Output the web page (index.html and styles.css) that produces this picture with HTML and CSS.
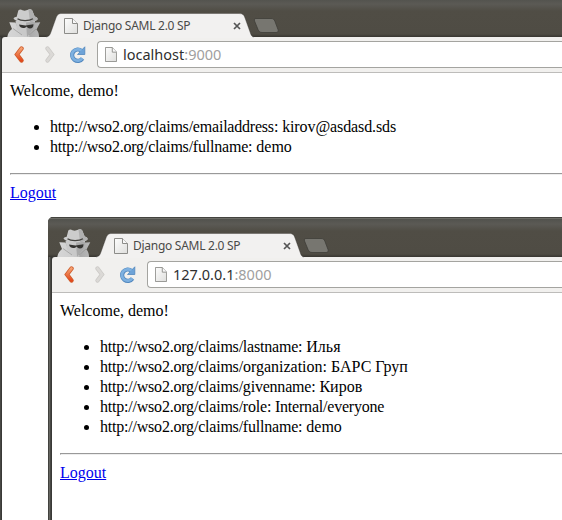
FILE: index.html
```html
<!DOCTYPE html>
<html lang="en">
<head>
<meta charset="utf-8">
<title>Django SAML 2.0 SP</title>
<link rel="stylesheet" href="styles.css">
</head>
<body>
<svg width="0" height="0" class="defs" aria-hidden="true">
  <defs>
    <linearGradient id="paper" x1="0" y1="0" x2="1" y2="1"><stop offset="0" stop-color="#fdfdfd"/><stop offset="1" stop-color="#dededc"/></linearGradient>
    <linearGradient id="orange" x1="0" y1="0" x2="0" y2="1"><stop offset="0" stop-color="#f4a070"/><stop offset="1" stop-color="#e4481c"/></linearGradient>
    <linearGradient id="coat" x1="0" y1="0" x2="1" y2="0"><stop offset="0" stop-color="#d6d6d6"/><stop offset=".55" stop-color="#cdcdcd"/><stop offset=".7" stop-color="#aaaaaa"/><stop offset="1" stop-color="#b8b8b8"/></linearGradient>
    <symbol id="spy" viewBox="0 0 34 28">
      <path d="M.3 28C1 24 2.500 22 5 20L2.300 13.200 8.500 13.500 10 17H27L28 13.500 33.300 13.200 29.500 20.500C31.500 23 32 25 32 28z" fill="url(#coat)"/>
      <path d="M8.500 12h19.500l-1 8-6 8h-4l-7-7z" fill="#c9c9c9"/>
      <path d="M19 13h9l-1 7-7 8z" fill="#a9a9a9"/>
      <path d="M6.500 9.500C7 8 8.500 8 9.700 7.700L11.300 1.500C12.500.300 14 .300 15.500 1.200 18 2.200 19 1.500 21.500.500 23.500 0 25 .5 25.500 2L27.700 7.500C30 8 31 9 30.500 10.500 27 14.500 10 14.500 6.500 9.500z" fill="#cccccc"/>
      <path d="M21.500.500C23.500 0 25 .5 25.500 2L27.700 7.500C30 8 31 9 30.500 10.500 29 12 26 13 23 13.300z" fill="#b0b0b0"/>
      <path d="M10.500 9.800C14 12.300 22 12.300 26 9.800" fill="none" stroke="#454440" stroke-width="1.300"/>
      <path d="M12 15.500l6.500 1 8-1.200c0 3-1.500 4.200-3.500 4.200-1.500 0-2.500-.7-3.500-2-1.500 2.200-6.500 2.500-7.500-2z" fill="#353431"/>
      <path d="M6 19.500L15 26M29 20L22 26" fill="none" stroke="#8f8f8d" stroke-width=".6"/>
    </symbol>
    <symbol id="page" viewBox="0 0 14 16" preserveAspectRatio="none">
      <path d="M.5.500h8l5 5v10H.500z" fill="url(#paper)" stroke="#8c8c89"/>
      <path d="M8.500.500v5h5" fill="#f8f8f8" stroke="#8c8c89"/>
    </symbol>
    <symbol id="back" viewBox="0 0 10 17"><path d="M7.500 2.500L3 8.500 7.500 14.500" fill="none" stroke="#cf5d2c" stroke-width="4.400" stroke-linecap="round"/><path d="M7.500 2.500L3 8.500 7.500 14.500" fill="none" stroke="url(#orange)" stroke-width="2.800" stroke-linecap="round"/></symbol>
    <symbol id="forward" viewBox="0 0 10 17"><path d="M2.500 2.500l4.500 6L2.500 14.500" fill="none" stroke="#cbc9c6" stroke-width="4.200" stroke-linecap="round"/><path d="M2.500 2.500l4.500 6L2.500 14.500" fill="none" stroke="#dbd9d6" stroke-width="2.800" stroke-linecap="round"/></symbol>
    <symbol id="reload" viewBox="0 0 17 17"><path d="M12.500 4.800A5.700 5.700 0 1 0 13.500 12.500" fill="none" stroke="#5288be" stroke-width="4.200"/><path d="M15.800.800v7.700H8.500z" fill="#6da3d8" stroke="#5288be" stroke-width=".8"/><path d="M12.500 4.800A5.700 5.700 0 1 0 13.300 12.200" fill="none" stroke="#7db0e0" stroke-width="2.800"/></symbol>
    <symbol id="tab" viewBox="0 0 208 25"><path d="M0 25V24C3 23.500 4 22 5 19L10 5C11.500 1.500 12.500.500 16 .500H193C197 .500 198 2 199 5L204 19C205 22.500 206 24 208 24V25z" fill="#f2f1f0"/><path d="M0 24C3 23.500 4 22 5 19L10 5C11.500 1.500 12.500.500 16 .500H193C197 .500 198 2 199 5L204 19C205 22.500 206 24 208 24" fill="none" stroke="#33322f" stroke-opacity=".35"/></symbol>
    <symbol id="newtab" viewBox="0 0 27 17"><path d="M3 1.500h15c2 0 3 .5 4 3l3 8c.7 2-.2 3-2 3H9c-2 0-3-1-4-3L1.500 4C1 2.500 1.500 1.500 3 1.500z" fill="#777670" stroke="#3f3e39" stroke-width=".8"/></symbol>
  </defs>
</svg>

<section class="window window-first">
  <header class="titlebar">
    <svg class="spy"><use href="#spy"/></svg>
    <div class="tab">
      <svg class="tab-shape"><use href="#tab"/></svg>
      <svg class="tab-page"><use href="#page"/></svg>
      <span class="tab-title">Django SAML 2.0 SP</span>
      <svg class="close" viewBox="0 0 8 8"><path d="M1 1l6 6M7 1L1 7"/></svg>
    </div>
    <svg class="newtab"><use href="#newtab"/></svg>
  </header>
  <nav class="toolbar">
    <svg class="back"><use href="#back"/></svg>
    <svg class="forward"><use href="#forward"/></svg>
    <svg class="reload"><use href="#reload"/></svg>
    <div class="omnibox"><svg class="url-page"><use href="#page"/></svg><span class="host">localhost</span><span class="port">:9000</span></div>
  </nav>
  <main class="content">
    <div>Welcome, demo!</div>
    <ul>
      <li><span class="tight">http://wso2.org/claims/emailaddress:</span> <span class="email">kirov@asdasd.sds</span></li>
      <li><span class="tight">http://wso2.org/claims/fullname:</span> demo</li>
    </ul>
    <hr>
    <a href="#">Logout</a>
  </main>
</section>

<section class="window window-second">
  <header class="titlebar">
    <svg class="spy"><use href="#spy"/></svg>
    <div class="tab">
      <svg class="tab-shape"><use href="#tab"/></svg>
      <svg class="tab-page"><use href="#page"/></svg>
      <span class="tab-title">Django SAML 2.0 SP</span>
      <svg class="close" viewBox="0 0 8 8"><path d="M1 1l6 6M7 1L1 7"/></svg>
    </div>
    <svg class="newtab"><use href="#newtab"/></svg>
  </header>
  <nav class="toolbar">
    <svg class="back"><use href="#back"/></svg>
    <svg class="forward"><use href="#forward"/></svg>
    <svg class="reload"><use href="#reload"/></svg>
    <div class="omnibox"><svg class="url-page"><use href="#page"/></svg><span class="host">127.0.0.1</span><span class="port">:8000</span></div>
  </nav>
  <main class="content">
    <div>Welcome, demo!</div>
    <ul>
      <li><span class="tight">http://wso2.org/claims/lastname:</span> Илья</li>
      <li><span class="tight">http://wso2.org/claims/</span>organization: БАРС Груп</li>
      <li><span class="tight">http://wso2.org/claims/givenname:</span> Киров</li>
      <li><span class="tight">http://wso2.org/claims/role: Internal/everyone</span></li>
      <li><span class="tight">http://wso2.org/claims/fullname:</span> demo</li>
    </ul>
    <hr>
    <a href="#">Logout</a>
  </main>
</section>
</body>
</html>
```
FILE: styles.css
```css
* { box-sizing: border-box; }
html, body { margin: 0; width: 562px; height: 520px; overflow: hidden; background: #fff; }
body { position: relative; }
svg { display: block; flex: none; }
.defs { position: absolute; }

.window {
  position: absolute;
  padding-left: 4px;
  border-radius: 5px 0 0 0;
  overflow: hidden;
  background: linear-gradient(90deg, #42423e 0 1px, #666661 1px 2px, #484844 2px 3px, #393936 3px 4px);
}
.window-first { left: -2px; top: -3px; width: 564px; height: 523px; }
.window-second { left: 48px; top: 217px; width: 514px; height: 303px; }

.titlebar {
  display: flex;
  align-items: flex-start;
  height: 40px;
  margin-left: -4px;
  padding-left: 9px;
  border-top: 1px solid #44443f;
  background: linear-gradient(#6d6d67 0 1px, #52524d 1px, #5b5a55 6px, #504d45 13px, #4f4c44 36px, #383631 39px);
}
.spy { width: 34px; height: 28px; margin-top: 11px; }
.tab {
  position: relative;
  display: flex;
  width: 208px;
  height: 25px;
  margin: 15px 0 -1px 5px;
  padding-left: 18px;
}
.tab-shape { position: absolute; left: 0; top: 0; width: 208px; height: 25px; }
.tab-page { position: relative; width: 14px; height: 16px; margin-top: 5px; }
.tab-title {
  position: relative;
  width: 109px;
  margin-left: 5px;
  font: 12px/25px "Noto Sans", "Open Sans", sans-serif;
  letter-spacing: -0.27px;
  color: #4a4a48;
  white-space: nowrap;
}
.close { position: relative; width: 8px; height: 8px; margin: 9px 0 0 41px; fill: none; stroke: #555; stroke-width: 1.7; }
.newtab { width: 27px; height: 17px; margin: 19px 0 0 -1px; }

.toolbar {
  display: flex;
  height: 36px;
  padding: 4px 0 4px 12px;
  border-radius: 3px 0 0 0;
  border-bottom: 1px solid #bdbcba;
  background: #f1f0ee;
  box-shadow: 0 -3px 0 -3px #f1f0ee;
}
.back { width: 10px; height: 17px; margin-top: 5px; }
.forward { width: 10px; height: 17px; margin: 5px 0 0 21px; }
.reload { width: 17px; height: 17px; margin: 5px 0 0 14px; }
.omnibox {
  display: flex;
  flex: 1;
  height: 27px;
  margin-left: 11px;
  border: 1px solid #a4a4a0;
  border-right: 0;
  border-radius: 4px 0 0 4px;
  background: #fff;
  font: 14.5px/25px "Noto Sans", "Open Sans", sans-serif;
}
.url-page { width: 12px; height: 15px; margin: 5px 6px 0 7px; }
.host { color: #2f2f2f; white-space: nowrap; }
.port { color: #a0a0a0; }

.content {
  height: 447px;
  padding: 8px 0 8px 8px;
  background: #fff;
  color: #000;
  font: 16px/20px "Liberation Serif", serif;
}
.window-second .content { height: 227px; }
.content ul { margin: 16px 0; padding-left: 40px; }
.content hr { height: 2px; margin: 8px 0; border: 0; border-top: 1px solid #999; border-bottom: 1px solid #eee; border-left: 1px solid #999; }
.content a { color: #00e; }
.tight { letter-spacing: -0.21px; }
.email { letter-spacing: -0.1px; }
```
